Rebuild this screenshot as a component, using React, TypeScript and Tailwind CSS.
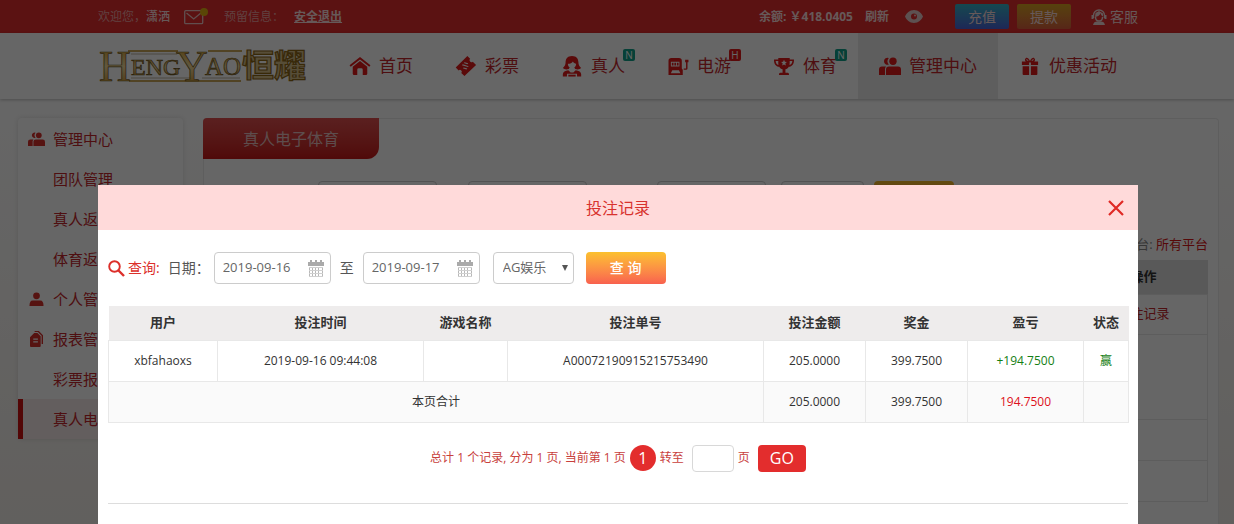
import { useState, type ReactNode } from 'react';

type IconProps = { className?: string };

const HomeIcon = ({ className }: IconProps) => (
  <svg viewBox="0 0 24 22" className={className} fill="currentColor">
    <path d="M12 1 23.5 10.2l-1.3 1.6L12 3.8 1.8 11.8.5 10.2z" />
    <path d="M12 5.500 20 11.700V19.500a1.500 1.500 0 0 1-1.500 1.500H15v-6a1.500 1.500 0 0 0-1.500-1.500h-3A1.500 1.500 0 0 0 9 15v6H5.500A1.500 1.500 0 0 1 4 19.500v-7.800z" />
  </svg>
);

const TicketIcon = ({ className }: IconProps) => (
  <svg viewBox="0 0 24 24" className={className} fill="currentColor">
    <path
      fillRule="evenodd"
      d="M13.500 1.200 16.500 4.200a2 2 0 0 0 2.900 3.100L23 10.800 10.300 23 6.800 19.700a2 2 0 0 0-2.800-2.900L.8 13.500zM9.500 8.800l4 1.200 1-1-4-1.200zM7.500 11.200l6.500 2 1-1-6.500-2zM8.500 14.500l4 1.200 1-1-4-1.200z"
    />
  </svg>
);

const DealerIcon = ({ className }: IconProps) => (
  <svg viewBox="0 0 22 24" className={className} fill="currentColor">
    <path
      fillRule="evenodd"
      d="M11 1C6 1 4 4.200 4 8c0 3-1 4.500-3 6.200 1.500 1.500 4 2 6.500 1l1-1.500C7 12.500 6.500 11 6.500 9.500 9 9.500 11 8.500 12 7c.8 1.500 2 2.300 3.500 2.500 0 1.500-.5 3-2 4l1 1.700c2.500 1 5 .5 6.500-1C19 12.500 18 11 18 8c0-3.800-2-7-7-7z"
    />
    <path d="M7 16.500 9.500 19h3l2.500-2.500c3.500.3 6 2 6 4.500v2.500h-4.500V20.500h-11v3H1V21c0-2.500 2.500-4.200 6-4.500z" />
    <path d="M7 21.500h8v2H7z" />
  </svg>
);

const SlotIcon = ({ className }: IconProps) => (
  <svg viewBox="0 0 22 20" className={className} fill="currentColor">
    <path
      fillRule="evenodd"
      d="M4 1h8a3 3 0 0 1 3 3v8l1 1.500V19H1v-5.500L1 12V4a3 3 0 0 1 3-3zM3.500 5v5h9V5zM5 14l-1.500 3h10L12 14z"
    />
    <path d="M4.500 6h1.800v3H4.500zm2.700 0H9v3H7.200zm2.700 0h1.700v3H9.900z" />
    <path d="M18.500 3H22v2.500h-1V12a1.500 1.500 0 0 1-1.500 1.500H17V12h2.500V5.500h-1z" />
  </svg>
);

const TrophyIcon = ({ className }: IconProps) => (
  <svg viewBox="0 0 22 20" className={className} fill="currentColor">
    <path
      fillRule="evenodd"
      d="M5 1h12v1.500h4.500c.3 4.500-2 7.500-5.500 7.800-.8 1.400-2 2.300-3.500 2.700v3.500H15c.8 0 1.300.7 1.300 2.500H5.700c0-1.800.5-2.500 1.300-2.500h2.500V13C8 12.600 6.800 11.700 6 10.300 2.500 10 .2 7 .5 2.500H5zM2.200 4.200c.3 2.300 1.200 3.700 2.900 4.200C4.900 7 5 5.600 5 4.200zm14.800 0c0 1.400 0 2.800-.2 4.200 1.700-.5 2.700-1.900 3-4.200zM11 3l-.9 2-2.200.2 1.700 1.500-.5 2.200L11 7.800l1.900 1.100-.5-2.200 1.700-1.500-2.200-.2z"
    />
  </svg>
);

const UsersIcon = ({ className }: IconProps) => (
  <svg viewBox="0 0 22 18" className={className} fill="currentColor">
    <path d="M9.800 1A3.500 3.500 0 1 0 9.800 7.500 5 5 0 0 1 9.800 1z" />
    <circle cx="14" cy="4.200" r="3.700" />
    <path d="M3 9.500h4a4 4 0 0 0-1 2.500v6H0v-5.500a3 3 0 0 1 3-3z" />
    <path d="M10 9.500h9a3 3 0 0 1 3 3V18H7v-5.500a3 3 0 0 1 3-3z" />
  </svg>
);

const GiftIcon = ({ className }: IconProps) => (
  <svg viewBox="0 0 20 20" className={className} fill="currentColor">
    <path
      fillRule="evenodd"
      d="M10 4.500C8.500 1 6.500.5 5.300 1.300 3.800 2.300 4.300 4 5.300 5H1v4h8V6h2v3h8V5h-4.300c1-1 1.500-2.700 0-3.700C13.500.5 11.500 1 10 4.500zM6 2.500c.8-.5 1.800.5 2.500 2C7 4.300 5.200 3.200 6 2.500zm8 0c.8.7-1 1.800-2.500 2 .7-1.500 1.700-2.500 2.500-2z"
    />
    <path d="M1.800 10.200H9V20H2.800a1 1 0 0 1-1-1zM11 10.200h7.200V19a1 1 0 0 1-1 1H11z" />
  </svg>
);

const UserIcon = ({ className }: IconProps) => (
  <svg viewBox="0 0 16 16" className={className} fill="currentColor">
    <circle cx="8" cy="4" r="3.600" />
    <path d="M4 9h8c2.500 0 3.500 2 3.500 6H.5c0-4 1-6 3.500-6z" />
  </svg>
);

const ReportIcon = ({ className }: IconProps) => (
  <svg viewBox="0 0 14 17" className={className} fill="currentColor">
    <path d="M5 0h4.500L14 4.500V14h-1.500V5L8.500 1H5z" />
    <path fillRule="evenodd" d="M4.500 2H8l3.500 3.500V16a1 1 0 0 1-1 1H1a1 1 0 0 1-1-1V6.500zM3.500 8v1.200h5V8zm0 3v1.200h5V11z" />
  </svg>
);

const MailIcon = () => (
  <svg viewBox="0 0 24 17" className="h-[17px] w-6" fill="none">
    <rect x=".7" y="2.700" width="18" height="13" rx="1" stroke="#f2c4c4" strokeWidth="1.300" />
    <path d="m2.500 5 7.200 6 7.200-6" stroke="#f2c4c4" strokeWidth="1.300" />
    <circle cx="20" cy="4" r="4" fill="#e0b010" />
  </svg>
);

const EyeIcon = () => (
  <svg viewBox="0 0 18 13" className="h-[13px] w-[18px]" fill="#e8caca">
    <path
      fillRule="evenodd"
      d="M9 0c4.500 0 7.500 3 9 6.500C16.500 10 13.500 13 9 13S1.500 10 0 6.500C1.500 3 4.500 0 9 0zm0 3.500a3 3 0 1 0 0 6 3 3 0 0 0 0-6z"
    />
    <circle cx="10" cy="5.500" r="1" />
  </svg>
);

const ServiceIcon = () => (
  <svg viewBox="0 0 16 16" className="size-4" fill="none" stroke="#f3dada" strokeWidth="1.400">
    <path d="M2.500 9V6.500a5.500 5.500 0 0 1 11 0V9" />
    <path d="M1.500 6v4M14.500 6v4" strokeWidth="2" />
    <path d="M4 8C7 7.500 9 6.500 9.500 4c.5 2 1 2.700 2.500 3.500V4.500L8 2 4.500 4z" fill="#f3dada" stroke="none" />
    <path d="M4.500 8c0 2.500 1.500 4 3.500 4s3.500-1.500 3.500-4" />
    <path d="M2 16c.5-2.500 2-3.500 4-3.500h4c2 0 3.500 1 4 3.500z" fill="#f3dada" stroke="none" />
  </svg>
);

const SearchIcon = () => (
  <svg viewBox="0 0 17 17" className="size-[17px]" fill="none" stroke="#dc2f2a">
    <circle cx="6.500" cy="6.500" r="5.300" strokeWidth="1.900" />
    <path d="m10.500 10.500 5.500 5.500" strokeWidth="2.400" />
  </svg>
);

const CalendarIcon = () => (
  <svg viewBox="0 0 16 18" className="h-[18px] w-4" fill="#aaa">
    <path d="M0 3h2V1h2v2h3V1h2v2h3V1h2v2h2v4H0z" />
    <path d="M1.500 8v9M4.500 8v9M7.500 8v9M10.500 8v9M14.500 8v9" stroke="#b8b8b8" />
    <path d="M1 8.500h14M1 11.500h14M1 14.500h14M1 17.500h14" stroke="#d0d0d0" />
  </svg>
);

function Logo() {
  return (
    <svg viewBox="0 0 210 40" className="h-10 w-[210px] shrink-0 overflow-visible" fontFamily="'Liberation Serif', serif">
      <defs>
        <linearGradient id="gold" x1="0" y1="0" x2="0" y2="1">
          <stop offset="0" stopColor="#c98d12" />
          <stop offset=".5" stopColor="#f4dc9c" />
          <stop offset="1" stopColor="#b9770a" />
        </linearGradient>
      </defs>
      <g fill="none" stroke="#b98a25">
        <path d="M30 5h50M31 35h112M110 5h34" strokeWidth="1.500" />
        <path d="M33 8h46M33 32h60M104 32h38" stroke="#7b6a3c" strokeWidth=".5" />
      </g>
      <g fill="url(#gold)" stroke="#6b5320" strokeWidth=".7">
        <text x="1" y="35" fontSize="44">H</text>
        <text x="33" y="29" fontSize="24">ENG</text>
        <text x="78" y="35" fontSize="44">Y</text>
        <text x="107" y="29" fontSize="25">AO</text>
      </g>
      <text
        x="144"
        y="31"
        fill="#d6c08a"
        stroke="#8d6615"
        strokeWidth="1.200"
        fontFamily="'Noto Sans CJK SC', sans-serif"
        fontSize="32"
        fontWeight="bold"
      >
        恒耀
      </text>
    </svg>
  );
}

type NavItem = { label: string; icon: ReactNode; badge?: 'N' | 'H'; active?: boolean; wide?: boolean };

const navItems: NavItem[] = [
  { label: '首页', icon: <HomeIcon className="h-5 w-[22px]" /> },
  { label: '彩票', icon: <TicketIcon className="size-[22px]" /> },
  { label: '真人', icon: <DealerIcon className="h-[22px] w-[22px]" />, badge: 'N' },
  { label: '电游', icon: <SlotIcon className="h-[19px] w-[22px]" />, badge: 'H' },
  { label: '体育', icon: <TrophyIcon className="h-[19px] w-[22px]" />, badge: 'N' },
  { label: '管理中心', icon: <UsersIcon className="h-[18px] w-[22px]" />, active: true, wide: true },
  { label: '优惠活动', icon: <GiftIcon className="h-[18px] w-[22px]" />, wide: true },
];

const menuItems = [
  { label: '管理中心', icon: <UsersIcon className="h-[14px] w-[17px]" /> },
  { label: '团队管理' },
  { label: '真人返水' },
  { label: '体育返水' },
  { label: '个人管理', icon: <UserIcon className="size-[15px]" /> },
  { label: '报表管理', icon: <ReportIcon className="h-4 w-[13px]" /> },
  { label: '彩票报表' },
  { label: '真人电子体育', active: true },
];

const columns = [
  { title: '用户', width: 'w-[109px]' },
  { title: '投注时间', width: 'w-[206px]' },
  { title: '游戏名称', width: 'w-[84px]' },
  { title: '投注单号', width: 'w-[256px]' },
  { title: '投注金额', width: 'w-[102px]' },
  { title: '奖金', width: 'w-[102px]' },
  { title: '盈亏', width: 'w-[116px]' },
  { title: '状态', width: 'w-[45px]' },
];

function TopBar() {
  return (
    <div className="flex h-[33px] items-center bg-[#e32d2d] pl-[98px] pr-24 text-xs text-[#ffdede]">
      <span className="text-[#f0a0a0]">欢迎您，</span>
      <span className="font-medium">潇洒</span>
      <a href="#mail" aria-label="站内信" className="ml-[14px]">
        <MailIcon />
      </a>
      <span className="ml-4 text-[#f0a0a0]">预留信息：</span>
      <a href="#logout" className="ml-[10px] font-bold underline">安全退出</a>
      <div className="ml-auto flex items-center">
        <span className="font-bold">余额: ￥418.0405</span>
        <button className="ml-3 font-bold">刷新</button>
        <button aria-label="显示余额" className="ml-4">
          <EyeIcon />
        </button>
        <button className="ml-8 h-[25px] w-[54px] rounded-xs bg-linear-to-b from-[#35b5c5] to-[#4a62d8] text-sm">充值</button>
        <button className="ml-2 h-[25px] w-[54px] rounded-xs bg-linear-to-b from-[#d9a520] to-[#d9603c] text-sm">提款</button>
        <a href="#service" className="ml-5 flex items-center gap-[3px] text-sm">
          <ServiceIcon />
          客服
        </a>
      </div>
    </div>
  );
}

function NavBar() {
  return (
    <header className="flex h-[66px] bg-white pl-[98px] shadow-[0_1px_3px_rgba(0,0,0,0.25)]">
      <div className="flex w-[230px] shrink-0 items-center">
        <Logo />
      </div>
      <nav className="flex">
        {navItems.map((item) => (
          <a
            key={item.label}
            href="#nav"
            className={`flex items-center justify-center gap-2 text-[17px] text-[#c4272c] ${item.wide ? 'w-[140px]' : 'w-[106px]'} ${item.active ? 'bg-[#ebebeb]' : ''}`}
          >
            <span className="text-[#e01a1a]">{item.icon}</span>
            <span className="relative">
              {item.label}
              {item.badge && (
                <span
                  className={`absolute -right-[10px] -top-1 flex size-3 items-center justify-center rounded-xs text-[10px] leading-3 text-white ${item.badge === 'N' ? 'bg-[#0fa08a]' : 'bg-[#e01a1a]'}`}
                >
                  {item.badge}
                </span>
              )}
            </span>
          </a>
        ))}
      </nav>
    </header>
  );
}

function SideMenu() {
  return (
    <aside className="w-[165px] shrink-0 self-start rounded-sm bg-white pt-px shadow-[0_0_5px_rgba(0,0,0,0.12)]">
      {menuItems.map((item) => (
        <a
          key={item.label}
          href="#menu"
          className={`flex h-10 items-center whitespace-nowrap border-l-5 pl-[5px] text-[15px] text-[#c4272c] ${item.active ? 'border-[#d01010] bg-[#f8eaea]' : 'border-transparent'}`}
        >
          <span className="flex w-[17px] shrink-0 justify-center text-[#d8302c]">{item.icon}</span>
          <span className="ml-2">{item.label}</span>
        </a>
      ))}
    </aside>
  );
}

function ReportPage() {
  return (
    <main className="h-[600px] min-w-0 flex-1 rounded-sm bg-white ring-1 ring-inset ring-[#ececec]">
      <h1 className="flex h-[41px] w-44 items-center justify-center rounded-tl-sm rounded-br-xl bg-linear-to-b from-[#e25050] to-[#c81818] text-base text-[#e8c0c0]">
        真人电子体育
      </h1>
      <div className="mt-[22px] flex pl-[115px]">
        <input aria-label="开始日期" className="h-8 w-[119px] rounded-sm border border-[#ccc]" />
        <input aria-label="结束日期" className="ml-[31px] h-8 w-[119px] rounded-sm border border-[#ccc]" />
        <input aria-label="用户名" className="ml-[70px] h-8 w-[109px] rounded-sm border border-[#ccc]" />
        <input aria-label="平台" className="ml-[15px] h-8 w-[83px] rounded-sm border border-[#ccc]" />
        <button aria-label="查询报表" className="ml-[10px] h-8 w-20 rounded-sm bg-linear-to-b from-[#f5bd25] to-[#fb6b50]" />
      </div>
      <p className="mt-[21px] px-[11px] text-right text-[13px] leading-5 text-[#888]">
        平台: <span className="text-[#d81818]">所有平台</span>
      </p>
      <div className="px-[11px] pt-1.5">
        <table className="w-full table-fixed border-collapse text-center">
          <thead>
            <tr className="h-[34px] bg-[#dedede] text-[13px] text-[#333]">
              <th />
              <th className="w-32 font-bold">操作</th>
            </tr>
          </thead>
          <tbody className="text-[13px] text-[#c4272c]">
            <tr className="h-10">
              <td className="border border-[#e8e8e8]" />
              <td className="border border-[#e8e8e8]">
                <a href="#records">投注记录</a>
              </td>
            </tr>
            <tr className="h-[85px]">
              <td colSpan={2} className="border border-[#e8e8e8]" />
            </tr>
            <tr className="h-[41px]">
              <td colSpan={2} className="border border-[#e8e8e8]" />
            </tr>
            <tr className="h-[41px]">
              <td colSpan={2} className="border border-[#e8e8e8]" />
            </tr>
          </tbody>
        </table>
      </div>
    </main>
  );
}

type DateFieldProps = { label: string; value: string; onChange: (value: string) => void };

function DateField({ label, value, onChange }: DateFieldProps) {
  return (
    <div className="flex h-8 w-[117px] items-center rounded-sm border border-[#ccc] pl-2 pr-[6px]">
      <input
        aria-label={label}
        value={value}
        onChange={(e) => onChange(e.target.value)}
        className="w-full min-w-0 text-[13px] text-[#666] outline-none"
      />
      <span className="shrink-0">
        <CalendarIcon />
      </span>
    </div>
  );
}

function SearchForm() {
  const [start, setStart] = useState('2019-09-16');
  const [end, setEnd] = useState('2019-09-17');

  return (
    <form className="flex items-center text-[13px] text-[#555]" onSubmit={(e) => e.preventDefault()}>
      <SearchIcon />
      <span className="ml-[3px] text-sm text-[#dc2f2a]">查询:</span>
      <span className="ml-2 w-[46px] whitespace-nowrap text-sm">日期：</span>
      <DateField label="开始日期" value={start} onChange={setStart} />
      <span className="mx-[9px] text-sm">至</span>
      <DateField label="结束日期" value={end} onChange={setEnd} />
      <div className="relative ml-[13px]">
        <select
          aria-label="平台"
          className="h-8 w-[81px] appearance-none rounded-sm border border-[#ccc] bg-white pl-[9px] text-[13px] text-[#666]"
        >
          <option>AG娱乐</option>
        </select>
        <svg viewBox="0 0 6 6" className="pointer-events-none absolute right-[6px] top-[13px] size-[6px]" fill="#555">
          <path d="M0 0h6L3 6z" />
        </svg>
      </div>
      <button className="ml-3 h-8 w-20 rounded-sm bg-linear-to-b from-[#fbc02d] to-[#f8604e] text-sm font-medium text-white">
        查 询
      </button>
    </form>
  );
}

function RecordTable() {
  return (
    <table className="mt-[22px] w-full table-fixed border-collapse text-center text-xs text-[#333]">
      <thead>
        <tr className="h-[34px] bg-[#eeecec] text-[13px]">
          {columns.map((col) => (
            <th key={col.title} className={`whitespace-nowrap font-bold ${col.width}`}>{col.title}</th>
          ))}
        </tr>
      </thead>
      <tbody className="[&_td]:border [&_td]:border-[#e8e8e8]">
        <tr className="h-[41px]">
          <td>xbfahaoxs</td>
          <td>2019-09-16 09:44:08</td>
          <td />
          <td>A00072190915215753490</td>
          <td>205.0000</td>
          <td>399.7500</td>
          <td className="text-[#158015]">+194.7500</td>
          <td className="text-[#158015]">赢</td>
        </tr>
        <tr className="h-[41px] bg-[#fafafa]">
          <td colSpan={4}>本页合计</td>
          <td>205.0000</td>
          <td>399.7500</td>
          <td className="text-[#dd1020]">194.7500</td>
          <td />
        </tr>
      </tbody>
    </table>
  );
}

function Pagination() {
  return (
    <div className="mt-[22px] flex items-center justify-center text-xs text-[#c8403c]">
      <span>总计 1 个记录, 分为 1 页, 当前第 1 页</span>
      <button className="ml-1 size-[26px] rounded-full bg-[#e32d2d] text-base leading-[26px] text-white">1</button>
      <label htmlFor="page" className="ml-1">转至</label>
      <input id="page" className="ml-2 h-[27px] w-[42px] rounded-sm border border-[#d8d8d8] px-1" />
      <span className="ml-1">页</span>
      <button className="ml-2 h-[27px] w-12 rounded-sm bg-[#e32d2d] text-base leading-[27px] text-white">GO</button>
    </div>
  );
}

function RecordDialog({ onClose }: { onClose: () => void }) {
  return (
    <div className="fixed inset-0 flex overflow-hidden bg-black/60 pl-[98px] pr-24 pt-[185px]">
      <section role="dialog" aria-labelledby="dialog-title" className="min-w-0 flex-1 bg-white">
        <div className="flex h-[45px] items-center bg-[#ffdada] pl-[30px] pr-[14px]">
          <h2 id="dialog-title" className="flex-1 text-center text-base text-[#d8322e]">投注记录</h2>
          <button aria-label="关闭" onClick={onClose}>
            <svg viewBox="0 0 16 16" className="size-4" stroke="#e02a26" strokeWidth="2.200">
              <path d="m1 1 14 14M15 1 1 15" />
            </svg>
          </button>
        </div>
        <div className="px-[10px] pt-[22px]">
          <SearchForm />
          <RecordTable />
          <Pagination />
          <hr className="mt-[31px] border-[#ddd]" />
        </div>
      </section>
    </div>
  );
}

export default function App() {
  const [open, setOpen] = useState(true);

  return (
    <div className="h-screen overflow-hidden bg-linear-to-b from-white from-20% to-[#f3efea] font-['Open_Sans','Noto_Sans_CJK_SC',sans-serif]">
      <TopBar />
      <NavBar />
      <div className="flex gap-5 pl-[18px] pr-[15px] pt-[19px]">
        <SideMenu />
        <ReportPage />
      </div>
      {open && <RecordDialog onClose={() => setOpen(false)} />}
    </div>
  );
}
